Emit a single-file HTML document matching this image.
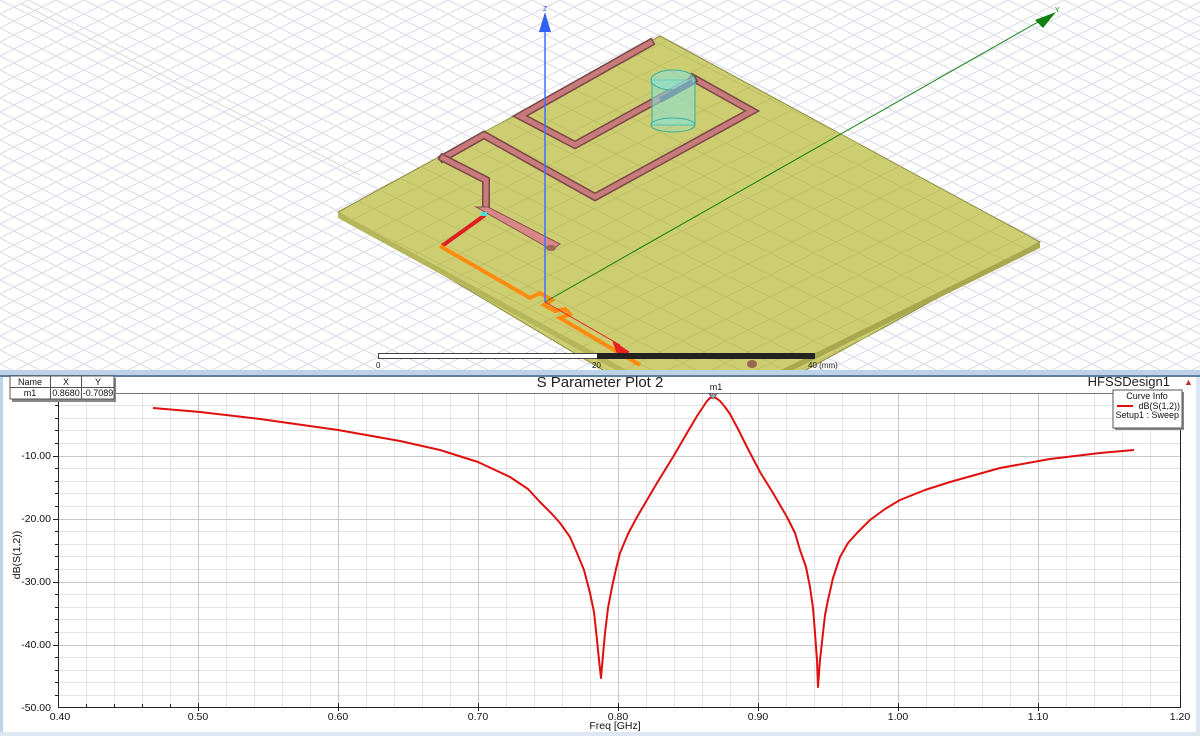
<!DOCTYPE html>
<html><head><meta charset="utf-8"><style>
html,body{margin:0;padding:0;width:1200px;height:736px;overflow:hidden;background:#fff}
svg{display:block}
text{font-family:"Liberation Sans",sans-serif}
</style></head><body>
<svg width="1200" height="736" viewBox="0 0 1200 736" xmlns="http://www.w3.org/2000/svg">
<defs>
<pattern id="iso" width="28" height="14" patternUnits="userSpaceOnUse">
<path d="M0 0 L28 14 M0 14 L28 0" stroke="#d8d8e6" stroke-width="1" fill="none"/>
</pattern>
<pattern id="iso2" width="44" height="22" patternUnits="userSpaceOnUse">
<path d="M0 0 L44 22 M0 22 L44 0" stroke="#bdbd66" stroke-width="0.8" fill="none"/>
</pattern>
<clipPath id="top"><rect x="0" y="0" width="1200" height="370"/></clipPath>
</defs>
<g clip-path="url(#top)">
<rect x="0" y="0" width="1200" height="370" fill="#fff"/>
<rect x="0" y="0" width="1200" height="370" fill="url(#iso)"/>
<line x1="20" y1="3" x2="360" y2="175" stroke="#d4dcd0" stroke-width="1"/>
<polygon points="338,212 660,36 1040,242 700,428" fill="#cdcd72" stroke="#8c8c40" stroke-width="1"/>
<polygon points="338,212 660,36 1040,242 700,428" fill="url(#iso2)"/>
<polygon points="338,212 700,410 700,416 338,218" fill="#b6b65a"/>
<polygon points="700,410 1040,242 1040,248 700,416" fill="#a8a850"/>
<g fill="none" stroke-linejoin="miter" stroke-linecap="square">
<polyline points="443,158 484,135 595,197 752,111 693,78" stroke="#7a4848" stroke-width="8"/>
<polyline points="443,158 484,135 595,197 752,111 693,78" stroke="#c97a7a" stroke-width="5"/>
<polyline points="693,80 575,145 520,116 650,43" stroke="#7a4848" stroke-width="8"/>
<polyline points="693,80 575,145 520,116 650,43" stroke="#c97a7a" stroke-width="5"/>
<polyline points="443,158 486,180 486,206" stroke="#7a4848" stroke-width="8"/>
<polyline points="443,158 486,180 486,206" stroke="#c97a7a" stroke-width="5"/>
</g>
<polygon points="476,207 488,207 560,244 552,250" fill="#d98888" stroke="#8a5050" stroke-width="1"/>
<ellipse cx="551" cy="248" rx="5" ry="3" fill="#9a6a50"/>
<polyline points="485,215 442,246" fill="none" stroke="#e02020" stroke-width="4"/>
<polyline points="440,246 530,298 540,293 552,300 544,305 555,311 565,309 570,314 560,318 640,365" fill="none" stroke="#ff8c10" stroke-width="4"/>
<rect x="481" y="212" width="6" height="4" fill="#40e0e0"/>
<g stroke="#3ab0a0" stroke-width="1" fill="#8ee0d0" fill-opacity="0.6">
<rect x="652" y="80" width="43" height="45"/>
<ellipse cx="673" cy="80" rx="22" ry="10"/>
<ellipse cx="673" cy="125" rx="22" ry="7" fill-opacity="0.3"/>
</g>
<polyline points="693,82 660,100" stroke="#7aa0b0" stroke-width="6"/>
<line x1="545" y1="302" x2="1045" y2="18" stroke="#108010" stroke-width="1"/>
<polygon points="1035,20 1056,12 1043,28" fill="#108010"/>
<text x="1055" y="12" font-size="7" fill="#108010">Y</text>
<line x1="545" y1="302" x2="545" y2="20" stroke="#4070ff" stroke-width="1.5"/>
<polygon points="545,12 539,32 551,32" fill="#3060f0"/>
<text x="543" y="11" font-size="7" fill="#3050e0">Z</text>
<line x1="545" y1="302" x2="620" y2="345" stroke="#e02020" stroke-width="1"/>
<polygon points="630,352 612,340 618,357" fill="#e82020"/>
<ellipse cx="752" cy="364" rx="5" ry="4" fill="#9a6a50"/>
<rect x="378.5" y="353.5" width="219" height="5" fill="#fff" stroke="#444"/>
<rect x="597" y="353" width="218" height="6" fill="#222"/>
<text x="376" y="368" font-size="8" fill="#222">0</text>
<text x="592" y="368" font-size="8" fill="#222">20</text>
<text x="808" y="368" font-size="8" fill="#222">40 (mm)</text>
</g>
<rect x="0" y="370" width="1200" height="6" fill="#bcd3ea"/>
<rect x="0" y="375" width="1200" height="2" fill="#5f7f9c"/>
<rect x="0" y="377" width="3" height="359" fill="#bcd3ea"/>
<rect x="1196" y="377" width="4" height="359" fill="#dfe8f2"/>
<rect x="0" y="732" width="1200" height="4" fill="#dfe8f2"/>
<g stroke="#e4e4e4" stroke-width="1">
<line x1="86.5" y1="393" x2="86.5" y2="707"/><line x1="114.5" y1="393" x2="114.5" y2="707"/><line x1="142.5" y1="393" x2="142.5" y2="707"/><line x1="170.5" y1="393" x2="170.5" y2="707"/>
<line x1="226.5" y1="393" x2="226.5" y2="707"/><line x1="254.5" y1="393" x2="254.5" y2="707"/><line x1="282.5" y1="393" x2="282.5" y2="707"/><line x1="310.5" y1="393" x2="310.5" y2="707"/>
<line x1="366.5" y1="393" x2="366.5" y2="707"/><line x1="394.5" y1="393" x2="394.5" y2="707"/><line x1="422.5" y1="393" x2="422.5" y2="707"/><line x1="450.5" y1="393" x2="450.5" y2="707"/>
<line x1="506.5" y1="393" x2="506.5" y2="707"/><line x1="534.5" y1="393" x2="534.5" y2="707"/><line x1="562.5" y1="393" x2="562.5" y2="707"/><line x1="590.5" y1="393" x2="590.5" y2="707"/>
<line x1="646.5" y1="393" x2="646.5" y2="707"/><line x1="674.5" y1="393" x2="674.5" y2="707"/><line x1="702.5" y1="393" x2="702.5" y2="707"/><line x1="730.5" y1="393" x2="730.5" y2="707"/>
<line x1="786.5" y1="393" x2="786.5" y2="707"/><line x1="814.5" y1="393" x2="814.5" y2="707"/><line x1="842.5" y1="393" x2="842.5" y2="707"/><line x1="870.5" y1="393" x2="870.5" y2="707"/>
<line x1="926.5" y1="393" x2="926.5" y2="707"/><line x1="954.5" y1="393" x2="954.5" y2="707"/><line x1="982.5" y1="393" x2="982.5" y2="707"/><line x1="1010.5" y1="393" x2="1010.5" y2="707"/>
<line x1="1066.5" y1="393" x2="1066.5" y2="707"/><line x1="1094.5" y1="393" x2="1094.5" y2="707"/><line x1="1122.5" y1="393" x2="1122.5" y2="707"/><line x1="1150.5" y1="393" x2="1150.5" y2="707"/>
<line x1="58" y1="405.5" x2="1180" y2="405.5"/><line x1="58" y1="418.5" x2="1180" y2="418.5"/><line x1="58" y1="430.5" x2="1180" y2="430.5"/><line x1="58" y1="443.5" x2="1180" y2="443.5"/>
<line x1="58" y1="468.5" x2="1180" y2="468.5"/><line x1="58" y1="481.5" x2="1180" y2="481.5"/><line x1="58" y1="493.5" x2="1180" y2="493.5"/><line x1="58" y1="506.5" x2="1180" y2="506.5"/>
<line x1="58" y1="531.5" x2="1180" y2="531.5"/><line x1="58" y1="544.5" x2="1180" y2="544.5"/><line x1="58" y1="556.5" x2="1180" y2="556.5"/><line x1="58" y1="569.5" x2="1180" y2="569.5"/>
<line x1="58" y1="594.5" x2="1180" y2="594.5"/><line x1="58" y1="607.5" x2="1180" y2="607.5"/><line x1="58" y1="619.5" x2="1180" y2="619.5"/><line x1="58" y1="632.5" x2="1180" y2="632.5"/>
<line x1="58" y1="657.5" x2="1180" y2="657.5"/><line x1="58" y1="670.5" x2="1180" y2="670.5"/><line x1="58" y1="682.5" x2="1180" y2="682.5"/><line x1="58" y1="695.5" x2="1180" y2="695.5"/>
</g>
<g stroke="#c8c8c8" stroke-width="1">
<line x1="198.5" y1="393" x2="198.5" y2="707"/><line x1="338.5" y1="393" x2="338.5" y2="707"/><line x1="478.5" y1="393" x2="478.5" y2="707"/><line x1="618.5" y1="393" x2="618.5" y2="707"/><line x1="758.5" y1="393" x2="758.5" y2="707"/><line x1="898.5" y1="393" x2="898.5" y2="707"/><line x1="1038.5" y1="393" x2="1038.5" y2="707"/>
<line x1="58" y1="456.5" x2="1180" y2="456.5"/><line x1="58" y1="519.5" x2="1180" y2="519.5"/><line x1="58" y1="582.5" x2="1180" y2="582.5"/><line x1="58" y1="645.5" x2="1180" y2="645.5"/>
</g>
<line x1="58" y1="393.5" x2="1180" y2="393.5" stroke="#777"/>
<line x1="58.5" y1="393" x2="58.5" y2="708" stroke="#222"/>
<line x1="58" y1="707.5" x2="1181" y2="707.5" stroke="#222"/>
<line x1="1180.5" y1="393" x2="1180.5" y2="708" stroke="#222"/>
<g stroke="#222">
<line x1="55" y1="405.5" x2="58" y2="405.5"/><line x1="55" y1="418.5" x2="58" y2="418.5"/><line x1="55" y1="430.5" x2="58" y2="430.5"/><line x1="55" y1="443.5" x2="58" y2="443.5"/><line x1="53" y1="456.5" x2="58" y2="456.5"/>
<line x1="55" y1="468.5" x2="58" y2="468.5"/><line x1="55" y1="481.5" x2="58" y2="481.5"/><line x1="55" y1="493.5" x2="58" y2="493.5"/><line x1="55" y1="506.5" x2="58" y2="506.5"/><line x1="53" y1="519.5" x2="58" y2="519.5"/>
<line x1="55" y1="531.5" x2="58" y2="531.5"/><line x1="55" y1="544.5" x2="58" y2="544.5"/><line x1="55" y1="556.5" x2="58" y2="556.5"/><line x1="55" y1="569.5" x2="58" y2="569.5"/><line x1="53" y1="582.5" x2="58" y2="582.5"/>
<line x1="55" y1="594.5" x2="58" y2="594.5"/><line x1="55" y1="607.5" x2="58" y2="607.5"/><line x1="55" y1="619.5" x2="58" y2="619.5"/><line x1="55" y1="632.5" x2="58" y2="632.5"/><line x1="53" y1="645.5" x2="58" y2="645.5"/>
<line x1="55" y1="657.5" x2="58" y2="657.5"/><line x1="55" y1="670.5" x2="58" y2="670.5"/><line x1="55" y1="682.5" x2="58" y2="682.5"/><line x1="55" y1="695.5" x2="58" y2="695.5"/>
<line x1="86.5" y1="704" x2="86.5" y2="707"/><line x1="114.5" y1="704" x2="114.5" y2="707"/><line x1="142.5" y1="704" x2="142.5" y2="707"/><line x1="170.5" y1="704" x2="170.5" y2="707"/><line x1="198.5" y1="703" x2="198.5" y2="711"/>
<line x1="338.5" y1="703" x2="338.5" y2="711"/><line x1="478.5" y1="703" x2="478.5" y2="711"/><line x1="618.5" y1="703" x2="618.5" y2="711"/><line x1="758.5" y1="703" x2="758.5" y2="711"/><line x1="898.5" y1="703" x2="898.5" y2="711"/><line x1="1038.5" y1="703" x2="1038.5" y2="711"/>
</g>
<g font-size="10.5" fill="#111" text-anchor="end">
<text x="51" y="459">-10.00</text><text x="51" y="522">-20.00</text><text x="51" y="585">-30.00</text><text x="51" y="648">-40.00</text><text x="51" y="711">-50.00</text>
</g>
<g font-size="10.5" fill="#111" text-anchor="middle">
<text x="60" y="720">0.40</text><text x="198" y="720">0.50</text><text x="338" y="720">0.60</text><text x="478" y="720">0.70</text><text x="618" y="720">0.80</text><text x="758" y="720">0.90</text><text x="898" y="720">1.00</text><text x="1038" y="720">1.10</text><text x="1180" y="720">1.20</text>
<text x="615" y="729">Freq [GHz]</text>
</g>
<text x="20" y="555" font-size="10.5" fill="#111" text-anchor="middle" transform="rotate(-90 20 555)">dB(S(1,2))</text>
<text x="600" y="387" font-size="15" fill="#222" text-anchor="middle">S Parameter Plot 2</text>
<text x="1170" y="386" font-size="13" fill="#222" text-anchor="end">HFSSDesign1</text>
<text x="1184" y="385" font-size="9" fill="#c03030">▲</text>
<path d="M153,408 L200,412 L260,419 L338,430 L400,441 L440,450 L478,462 L510,477 L528,489 L540,502 L552,514 L560,523 L570,537 L577,553 L584,570 L590,593 L594,612 L597,640 L599,660 L601,678 L603,655 L605,633 L608,608 L612,587 L616,569 L620,553 L628,534 L637,517 L647,500 L657,483 L673,457 L687,433 L697,416 L703,407 L707,401 L710,398 L713,397 L716,398 L720,401 L725,407 L730,414 L738,429 L747,447 L760,472 L773,493 L787,517 L795,533 L800,550 L806,567 L810,587 L813,608 L815,633 L817,660 L818,687 L820,660 L823,633 L825,615 L828,600 L833,578 L840,557 L848,543 L857,533 L870,520 L885,509 L900,500 L925,490 L950,482 L1000,468 L1050,459 L1100,453 L1134,450" fill="none" stroke="#e01010" stroke-width="2" stroke-linejoin="round"/>
<polygon points="709,394 717,394 713,399" fill="#aaa" stroke="#555" stroke-width="0.7"/>
<text x="716" y="390" font-size="9" fill="#111" text-anchor="middle">m1</text>
<rect x="12" y="378" width="104" height="24" fill="#888"/>
<rect x="10" y="376" width="104" height="23" fill="#fff" stroke="#555"/>
<line x1="10" y1="387.5" x2="114" y2="387.5" stroke="#555"/>
<line x1="50.5" y1="376" x2="50.5" y2="399" stroke="#555"/>
<line x1="81.5" y1="376" x2="81.5" y2="399" stroke="#555"/>
<g font-size="9" fill="#111" text-anchor="middle">
<text x="30" y="385">Name</text><text x="66" y="385">X</text><text x="98" y="385">Y</text>
<text x="30" y="396">m1</text><text x="66" y="396">0.8680</text><text x="98" y="396">-0.7089</text>
</g>
<rect x="1115" y="392" width="69" height="38" fill="#888"/>
<rect x="1113" y="390" width="69" height="38" fill="#fff" stroke="#555"/>
<g font-size="9" fill="#111">
<text x="1147" y="399" text-anchor="middle">Curve Info</text>
<text x="1180" y="409" text-anchor="end">dB(S(1,2))</text>
<text x="1179" y="418" text-anchor="end">Setup1 : Sweep</text>
</g>
<line x1="1117" y1="406" x2="1133" y2="406" stroke="#e01010" stroke-width="2"/>
</svg>
</body></html>
